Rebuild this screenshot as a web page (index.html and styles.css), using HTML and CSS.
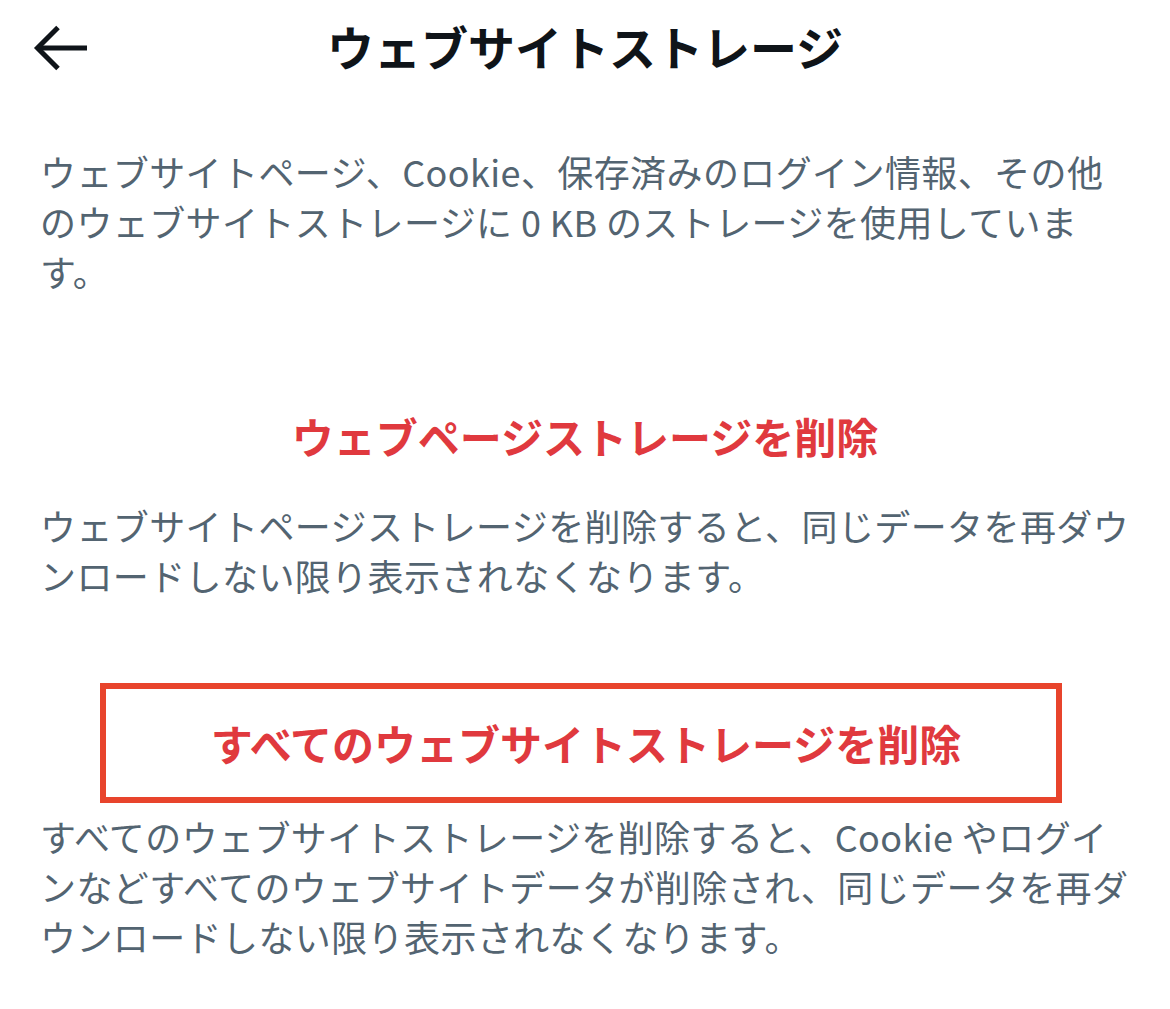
FILE: index.html
```
<!DOCTYPE html>
<html lang="ja">
<head>
<meta charset="utf-8">
<link rel="stylesheet" href="styles.css">
</head>
<body>
<div class="page">
  <header class="bar">
    <div class="back">
      <svg width="56" height="50" viewBox="0 0 56 50">
        <path d="M6 25 H54" stroke="#0f1419" stroke-width="5" fill="none"/>
        <path d="M25 4.5 L4.5 25 L25 45.5" stroke="#0f1419" stroke-width="5" fill="none" stroke-linejoin="miter"/>
      </svg>
    </div>
    <h1 class="title">ウェブサイトストレージ</h1>
    <div></div>
  </header>
  <p class="desc first">ウェブサイトページ、Cookie、保存済みのログイン情報、その他<br>のウェブサイトストレージに 0 KB のストレージを使用していま<br>す。</p>
  <div class="action">ウェブページストレージを削除</div>
  <p class="desc">ウェブサイトページストレージを削除すると、同じデータを再ダウ<br>ンロードしない限り表示されなくなります。</p>
  <div class="action boxed"><span>すべてのウェブサイトストレージを削除</span></div>
  <p class="desc last">すべてのウェブサイトストレージを削除すると、Cookie やログイ<br>ンなどすべてのウェブサイトデータが削除され、同じデータを再ダ<br>ウンロードしない限り表示されなくなります。</p>
</div>
</body>
</html>
```
FILE: styles.css
```
html, body {
  margin: 0;
  padding: 0;
  background: #ffffff;
}
body {
  font-family: "Noto Sans CJK JP", "Noto Sans", sans-serif;
  width: 1170px;
  height: 1009px;
  overflow: hidden;
}
.page {
  display: flex;
  flex-direction: column;
}
.bar {
  display: grid;
  grid-template-columns: 1fr auto 1fr;
  align-items: center;
  height: 96px;
}
.back {
  padding-left: 33px;
  display: flex;
  align-items: center;
}
.back svg {
  display: block;
}
.title {
  margin: 0;
  font-size: 47px;
  font-weight: 700;
  color: #0f1419;
  line-height: 60px;
  padding-bottom: 4px;
}
.desc {
  margin: 0;
  padding: 0 40px;
  font-size: 36px;
  letter-spacing: 0.4px;
  line-height: 50px;
  color: #536471;
  white-space: nowrap;
}
.desc.first {
  margin-top: 50px;
}
.action {
  text-align: center;
  font-size: 42px;
  font-weight: 700;
  color: #e0393e;
  line-height: 60px;
}
.action:not(.boxed) {
  margin-top: 110px;
  margin-bottom: 34px;
}
.action.boxed {
  margin: 83px 108px 8px 100px;
  border: 6px solid #e8442c;
  height: 108px;
  display: flex;
  align-items: center;
  justify-content: center;
  padding-left: 10px;
}
```
